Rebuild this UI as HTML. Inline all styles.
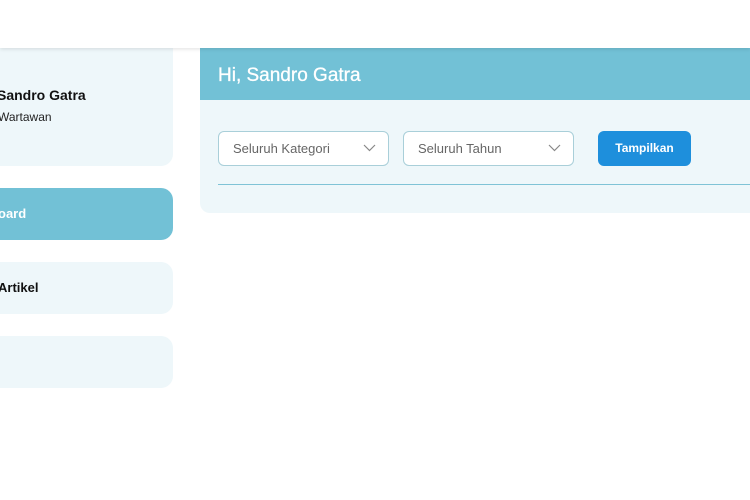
<!DOCTYPE html>
<html><head><style>
*{margin:0;padding:0;box-sizing:border-box}
body{width:750px;height:500px;overflow:hidden;background:#fff;font-family:"Liberation Sans",sans-serif;position:relative}
.hdr{position:absolute;left:0;top:0;width:750px;height:48px;background:#fff;box-shadow:0 1px 4px rgba(0,0,0,.12);z-index:5}
.card{position:absolute;left:-30px;width:203px;border-radius:12px;background:#eef7fa}
.t{position:absolute;font-weight:bold;font-size:14px;color:#111}
.panel{position:absolute;left:200px;top:30px;width:580px;height:183px;background:#eef7fa;border-radius:10px;overflow:hidden}
.band{position:absolute;left:0;top:0;width:100%;height:70px;background:#72c1d6}
.sel{position:absolute;top:101px;width:171px;height:35px;border:1px solid #a9cfd9;border-radius:6px;background:#fff;font-size:13px;color:#666;padding:9px 0 0 14px}
.sel svg{position:absolute;right:12px;top:12px}
.btn{position:absolute;left:398px;top:101px;width:93px;height:35px;border-radius:6px;background:#1e8fdc;color:#fff;font-weight:bold;font-size:12px;text-align:center;line-height:35px}
</style></head><body>
<div class="hdr"></div>
<div class="card" style="top:20px;height:146px"></div>
<div class="t" style="left:-3px;top:87px;font-size:14px">Sandro Gatra</div>
<div style="position:absolute;left:-2px;top:110px;font-size:12px;color:#222">Wartawan</div>
<div class="card" style="top:188px;height:52px;background:#72c1d6"></div>
<div class="t" style="left:-2px;top:206px;color:#fff;font-size:13px">oard</div>
<div class="card" style="top:262px;height:52px"></div>
<div class="t" style="left:-2px;top:280px;font-size:13px">Artikel</div>
<div class="card" style="top:336px;height:52px"></div>
<div class="panel">
<div class="band"></div>
<div style="position:absolute;left:18px;top:35px;font-size:19px;color:#fff;-webkit-text-stroke:0.3px #fff">Hi, Sandro Gatra</div>
<div class="sel" style="left:18px">Seluruh Kategori<svg width="13" height="8" viewBox="0 0 13 8"><path d="M1 1l5.5 5.5L12 1" fill="none" stroke="#888" stroke-width="1.2"/></svg></div>
<div class="sel" style="left:203px">Seluruh Tahun<svg width="13" height="8" viewBox="0 0 13 8"><path d="M1 1l5.5 5.5L12 1" fill="none" stroke="#888" stroke-width="1.2"/></svg></div>
<div class="btn">Tampilkan</div>
<div style="position:absolute;left:18px;top:154px;width:600px;height:1px;background:#7fc3d6"></div>
</div>
</body></html>
